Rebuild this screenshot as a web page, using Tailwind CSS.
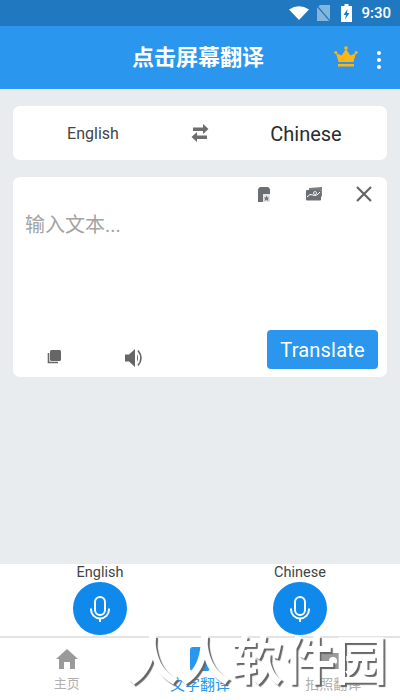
<!DOCTYPE html>
<html lang="zh">
<head>
  <meta charset="UTF-8" />
  <title>点击屏幕翻译</title>
  <script src="https://cdn.jsdelivr.net/npm/@tailwindcss/browser@4"></script>
</head>
<body class="font-['Roboto','Noto_Sans_CJK_SC',sans-serif] bg-white">
<div class="relative w-[400px] h-[700px] overflow-hidden flex flex-col bg-[#e8ecef]">

  <!-- Status bar -->
  <div class="h-[26px] bg-[#2079c0] flex items-center justify-end pr-[9px] text-white">
    <svg width="20" height="14" viewBox="0 0 20 14"><path d="M0 3.500 Q10 -3 20 3.500 L10 14Z" fill="#fff"/></svg>
    <svg class="ml-[8px]" width="13" height="16" viewBox="0 0 13 16"><path d="M3 0h10v16H0V3z" fill="#fff" fill-opacity=".45"/><path d="M0 1l13 15" stroke="#2079c0" stroke-width="1.200"/></svg>
    <svg class="ml-[11px]" width="11" height="18" viewBox="0 0 11 18"><path d="M3.500 0h4v2H11v16H0V2h3.500z" fill="#fff"/><path d="M6.500 5L2.500 11H5L4 15.500 8.500 9H6z" fill="#2079c0"/></svg>
    <span class="ml-[9px] text-[15px] font-medium leading-none">9:30</span>
  </div>

  <!-- App bar -->
  <div class="relative h-[63px] bg-[#2a96ee] flex items-center justify-center">
    <span class="pr-[4px] text-white text-[22px] font-bold">点击屏幕翻译</span>
    <svg class="absolute left-[334px] top-[20px]" width="24" height="22" viewBox="0 0 24 22" fill="#fdb515">
      <circle cx="12" cy="2" r="1.800"/><circle cx="1.800" cy="6.500" r="1.500"/><circle cx="22.200" cy="6.500" r="1.500"/>
      <path d="M12 3 L16.500 9.500 L22 7 L19.500 16 H4.500 L2 7 L7.500 9.500Z"/>
      <rect x="4" y="18" width="16" height="2.500"/>
    </svg>
    <div class="absolute left-[377px] top-[25px] flex flex-col gap-[3px]">
      <i class="block w-[4px] h-[4px] rounded-full bg-white"></i>
      <i class="block w-[4px] h-[4px] rounded-full bg-white"></i>
      <i class="block w-[4px] h-[4px] rounded-full bg-white"></i>
    </div>
  </div>

  <!-- Main -->
  <div class="flex-1 px-[13px] pt-[17px]">
    <!-- Language selector -->
    <div class="h-[54px] bg-white rounded-[7px] flex items-center">
      <span class="w-[160px] pt-[2px] text-center text-[16px] text-[#444]">English</span>
      <svg class="ml-[18px]" width="18" height="18" viewBox="0 0 18 18" fill="#6e6e6e">
        <path d="M12 0l5.500 5-5.500 5V7H2V3.500h10z"/>
        <path d="M6 8L.5 13 6 18v-3h10v-3.500H6z"/>
      </svg>
      <span class="ml-[43px] w-[108px] pt-[2px] text-center text-[20px] text-[#2b2b2b]">Chinese</span>
    </div>

    <!-- Input card -->
    <div class="relative h-[200px] mt-[17px] bg-white rounded-[7px]">
      <div class="absolute left-[245px] top-[9px] flex items-center">
        <svg width="12" height="15" viewBox="0 0 12 15"><path d="M2 0h8l2 2v13H0V2z" fill="#6b6f73"/><rect x="5" y="7" width="7" height="8" fill="#e4e6e8"/><path d="M8.500 8.500l1 2h1.500l-1 1.500.500 2-2-1-2 1 .500-2-1-1.500h1.500z" fill="#777"/></svg>
        <svg class="ml-[36px]" width="17" height="14" viewBox="0 0 17 14"><path d="M3 1l13-1v9l-1 1V3L3 3z" fill="#7b7f83"/><rect x="0" y="3" width="15" height="10.500" rx="1" fill="#6b6f73"/><path d="M1 10q3-4 6-2t7-3" stroke="#fff" stroke-width="1" fill="none"/><circle cx="9" cy="6" r="1.500" fill="none" stroke="#fff" stroke-width=".8"/></svg>
        <svg class="ml-[33px]" width="16" height="16" viewBox="0 0 16 16"><path d="M1 1l14 14M15 1L1 15" stroke="#666" stroke-width="2.200"/></svg>
      </div>
      <p class="absolute left-[12px] top-[33px] text-[20px] text-[#a3a3a3]">输入文本...</p>
      <svg class="absolute left-[34px] top-[173px]" width="14" height="14" viewBox="0 0 14 14" fill="#666"><rect x="3" y="0" width="11" height="11" rx="1.500"/><path d="M1.500 3v9.500H11" fill="none" stroke="#666" stroke-width="1.600"/></svg>
      <svg class="absolute left-[112px] top-[171px]" width="20" height="20" viewBox="0 0 20 20" fill="#666"><path d="M0 6.500h4L10 1v18l-6-5.500H0z"/><path d="M12 6q2 4 0 8z"/><path d="M13 2.500q6 7.500 0 15" fill="none" stroke="#666" stroke-width="1.600"/></svg>
      <button class="absolute left-[254px] top-[153px] w-[111px] h-[39px] bg-[#2a96ee] rounded-[4px] text-white text-[20px] tracking-[0.2px]">Translate</button>
    </div>
  </div>

  <!-- Voice buttons -->
  <div class="h-[74px] bg-white border-b-[2px] border-[#e4e4e4] flex">
    <div class="w-[200px] flex flex-col items-center">
      <span class="text-[14.5px] leading-[18px] text-[#444]">English</span>
      <div class="w-[54px] h-[53px] rounded-full bg-[#1089ec] flex items-center justify-center">
        <svg width="20" height="26" viewBox="0 0 20 26" fill="none" stroke="#fff"><rect x="5" y="1" width="10" height="18" rx="5" stroke-width="2"/><path d="M1 12.500v1a9 9 0 0 0 18 0v-1" stroke-width="2"/><path d="M10 22v4" stroke-width="2"/></svg>
      </div>
    </div>
    <div class="w-[200px] flex flex-col items-center">
      <span class="text-[14.5px] leading-[18px] text-[#444]">Chinese</span>
      <div class="w-[54px] h-[53px] rounded-full bg-[#1089ec] flex items-center justify-center">
        <svg width="20" height="26" viewBox="0 0 20 26" fill="none" stroke="#fff"><rect x="5" y="1" width="10" height="18" rx="5" stroke-width="2"/><path d="M1 12.500v1a9 9 0 0 0 18 0v-1" stroke-width="2"/><path d="M10 22v4" stroke-width="2"/></svg>
      </div>
    </div>
  </div>

  <!-- Bottom tabs -->
  <div class="h-[62px] bg-white grid grid-cols-3 text-[13px]">
    <div class="flex flex-col items-center pt-[11px]">
      <svg width="22" height="20" viewBox="0 0 22 20" fill="#9a9a9a"><path d="M11 0L22 10h-3v10h-5v-7H8v7H3V10H0z"/></svg>
      <span class="mt-[5px] text-[#b0b0b0]">主页</span>
    </div>
    <div class="flex flex-col items-center pt-[9px]">
      <svg width="20" height="24" viewBox="0 0 20 24" fill="#2a96ee"><rect x="0" y="0" width="20" height="24" rx="3"/></svg>
      <span class="mt-[3px] text-[15px] text-[#2a96ee]">文字翻译</span>
    </div>
    <div class="flex flex-col items-center pt-[11px]">
      <svg width="22" height="20" viewBox="0 0 22 20" fill="#9a9a9a"><rect x="0" y="4" width="22" height="16" rx="2"/><circle cx="11" cy="12" r="4" fill="#fff"/></svg>
      <span class="mt-[5px] text-[14px] text-[#b0b0b0]">拍照翻译</span>
    </div>
  </div>

  <!-- Watermark -->
  <div class="absolute left-[127px] top-[632px] text-[52px] leading-[62px] font-bold text-white whitespace-nowrap [text-shadow:2px_2px_1px_#666]">人人软件园</div>
</div>
</body>
</html>
